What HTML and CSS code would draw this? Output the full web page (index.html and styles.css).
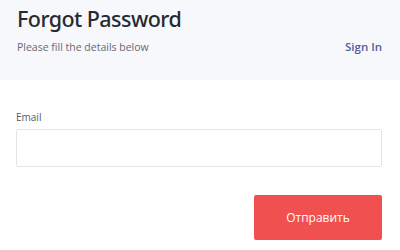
FILE: index.html
```html
<!DOCTYPE html>
<html lang="en">
<head>
  <meta charset="UTF-8">
  <meta name="viewport" content="width=device-width, initial-scale=1.0">
  <title>Forgot Password</title>
  <link rel="stylesheet" href="styles.css">
</head>
<body>

  <!-- Header -->
  <header class="header">
    <h1 class="title">Forgot Password</h1>
    <div class="header-row">
      <span class="subtitle">Please fill the details below</span>
      <a class="signin" href="#">Sign In</a>
    </div>
  </header>

  <!-- Form -->
  <form class="form">
    <label class="label" for="email">Email</label>
    <input class="input" type="email" id="email">
    <div class="actions">
      <button class="submit" type="submit">Отправить</button>
    </div>
  </form>

</body>
</html>
```

FILE: styles.css
```css
body {
  font-family: 'Open Sans', 'Noto Sans', Arial, sans-serif;
  background-color: #ffffff;
  color: #2b2f36;
  margin: 0;
  padding: 0;
}

/* Header styling */
.header {
  height: 80px;
  background-color: #f7f8fb;
  padding: 4px 18px 0 17px;
  box-sizing: border-box;
}
.title {
  margin: 0;
  font-family: 'Noto Sans', 'Open Sans', Arial, sans-serif;
  font-size: 21.5px;
  font-weight: 500;
  line-height: 30px;
  letter-spacing: -0.55px;
  color: #262a31;
}
.header-row {
  display: flex;
  justify-content: space-between;
  align-items: center;
  margin-top: 5px;
}
.subtitle {
  font-size: 10.5px;
  color: #666a70;
}
.signin {
  font-size: 11.5px;
  font-weight: 600;
  color: #4f5d9c;
  text-decoration: none;
}

.form {
  padding: 30px 18px 0 16px;
  display: flex;
  flex-direction: column;
}
.label {
  font-size: 10px;
  color: #555a60;
  line-height: 14px;
}
.input {
  margin-top: 5px;
  height: 38px;
  border: 1px solid #e3e4e7;
  border-radius: 2px;
  box-sizing: border-box;
  background: #ffffff;
}
.actions {
  display: flex;
  justify-content: flex-end;
  margin-top: 28px;
}
.submit {
  width: 128px;
  height: 45px;
  border: none;
  border-radius: 2px;
  background-color: #f05050;
  color: #ffffff;
  font-family: 'Open Sans', 'Noto Sans', Arial, sans-serif;
  font-size: 12px;
}
```
